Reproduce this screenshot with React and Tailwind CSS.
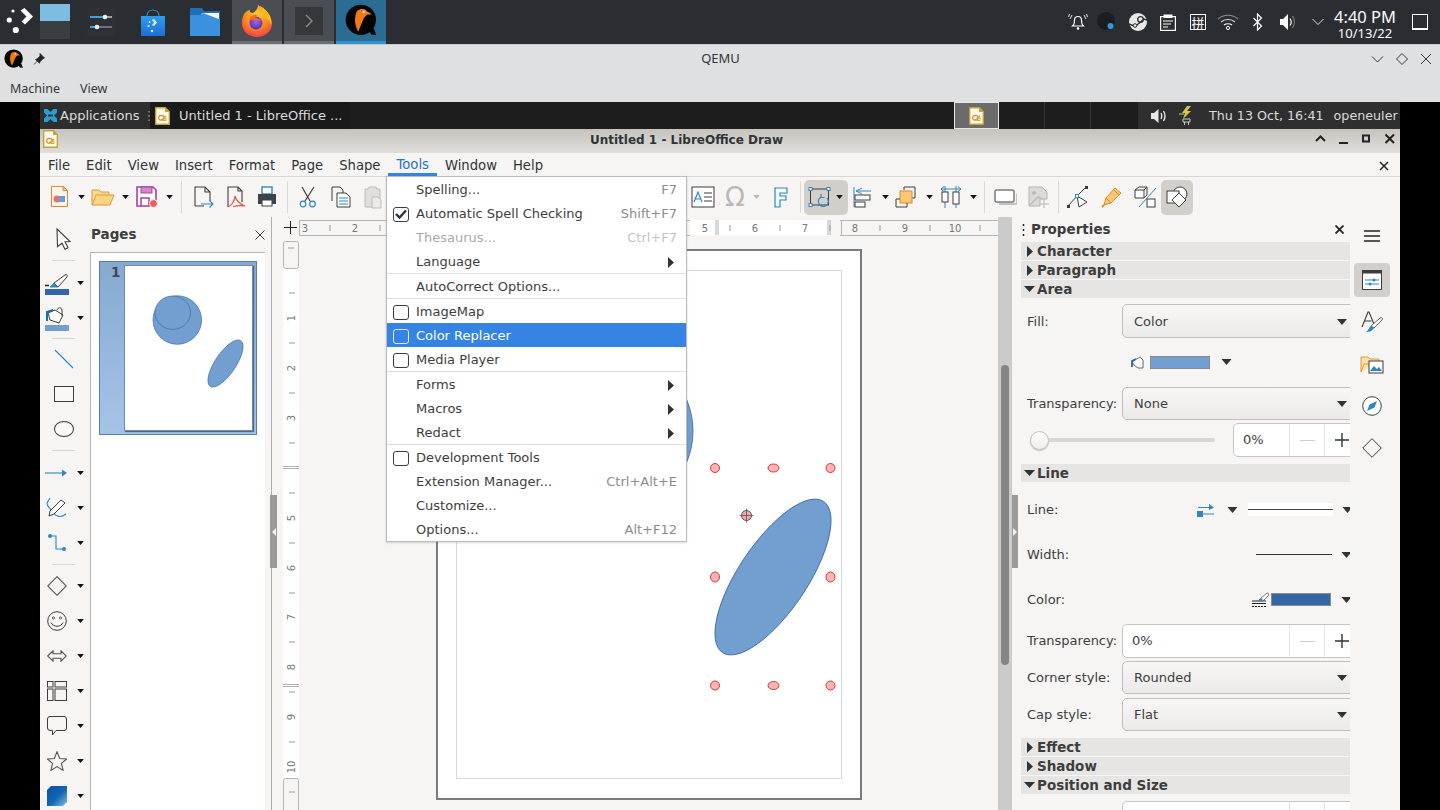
import React from 'react';

const D = "font-['DejaVu_Sans',sans-serif]";
const N = "font-['Noto_Sans',sans-serif]";
const INK = '#3d3d3d';
const BL = '#2f86c1';

const Svg = ({ w = 24, h = 24, children, className = '' }) => (
  <svg width={w} height={h} viewBox={`0 0 ${w} ${h}`} fill="none" className={'block shrink-0 ' + className}>{children}</svg>
);
const Tri = ({ color = '#111', w = 7, h = 4 }) => (
  <svg width={w} height={h} viewBox="0 0 10 6" className="block shrink-0"><path d="M0 0H10L5 6Z" fill={color} /></svg>
);

const QemuLogo = ({ s = 20 }) => (
  <svg width={s} height={s} viewBox="0 0 20 20" className="block shrink-0">
    <circle cx="9.6" cy="9.6" r="9.2" fill="#050505" />
    <path d="M14 15l3.5 0 1.5 3.8-3.2-.3z" fill="#050505" />
    <path d="M6.3 7.5C6.4 4 9 2.6 11.2 3.1c1 .2 1.7.8 2.3 1.5l2.8 1.6-3 .3c-1.2.9-2 2.3-2.7 3.9l-2.6 6.4C6.2 12.8 5.7 10 6.3 7.5z" fill="#f07a17" />
    <circle cx="11.4" cy="4.9" r=".7" fill="#fff" />
  </svg>
);

const DrawDoc = ({ w = 15, h = 18 }) => (
  <svg width={w} height={h} viewBox="0 0 15 18" className="block shrink-0">
    <path d="M.7.7h9.6l4 4v12.6H.7z" fill="#fffdf2" stroke="#c7a02e" strokeWidth="1.4" />
    <path d="M10 .7l4.3 4.3H10z" fill="#c7a02e" />
    <ellipse cx="6.4" cy="10.8" rx="2.8" ry="2.4" fill="none" stroke="#e2802c" strokeWidth="1.1" />
    <path d="M6 13.2l5-4.2" stroke="#c7a02e" strokeWidth="1.1" />
    <path d="M8 11h3v2.5H8z" fill="none" stroke="#d7a62d" strokeWidth="1" />
  </svg>
);

const Tray = ({ children }) => <div className="flex h-[30px] w-[30px] items-center justify-center">{children}</div>;

/* ---------- KDE panel ---------- */
const TopPanel = () => (
  <div className="flex h-[45px] shrink-0 items-stretch border-b border-[#c8cacc] bg-[#2a2e32]">
    <div className="flex w-[40px] items-center justify-center">
      <svg width="30" height="32" viewBox="0 0 30 32" className="block">
        <circle cx="8" cy="5" r="1.6" fill="#fcfcfc" />
        <circle cx="4.3" cy="14" r="2.6" fill="#fcfcfc" />
        <circle cx="10.8" cy="24" r="3.1" fill="#fcfcfc" />
        <path d="M15.5 4.5l4-2.5 8.5 8.5-8 8-3.5-3 5-5z" fill="#fcfcfc" />
      </svg>
    </div>
    <div className="my-[4px] flex w-[30px] flex-col">
      <div className="h-[17px] bg-[#7dbde2]" />
      <div className="h-[18px] bg-[#3a3e43]" />
    </div>
    <div className="flex w-[62px] items-center justify-center">
      <svg width="28" height="28" viewBox="0 0 28 28" className="block">
        <rect width="28" height="28" fill="#2d3136" />
        <rect x="3" y="8" width="22" height="2" fill="#9ea2a5" />
        <rect x="3" y="8" width="15" height="2" fill="#3f9fe6" />
        <circle cx="18" cy="9" r="2.3" fill="#f2f2f2" />
        <rect x="3" y="18" width="22" height="2" fill="#6f7377" />
        <rect x="3" y="18" width="9" height="2" fill="#3f9fe6" />
        <circle cx="10" cy="19" r="2.3" fill="#f2f2f2" />
      </svg>
    </div>
    <div className="flex w-[42px] items-center justify-center">
      <svg width="26" height="28" viewBox="0 0 26 28" className="block">
        <defs><linearGradient id="bag" x1="0" y1="0" x2="0" y2="1"><stop offset="0" stopColor="#2e9cf0" /><stop offset="1" stopColor="#1c6fd6" /></linearGradient></defs>
        <path d="M7 8C7 0 19 0 19 8" stroke="#2a8fd8" strokeWidth="1.2" fill="none" />
        <path d="M1 8h24v20H1z" fill="url(#bag)" />
        <path d="M12 12l2-1 3 3.5-3 3.5-2-1 2-2.500z" fill="#e9f5ff" />
        <circle cx="9.500" cy="14" r=".9" fill="#e9f5ff" /><circle cx="8.500" cy="18" r="1.100" fill="#e9f5ff" /><circle cx="12" cy="23" r="1.200" fill="#e9f5ff" />
      </svg>
    </div>
    <div className="ml-[4px] flex w-[54px] items-center justify-center">
      <svg width="30" height="28" viewBox="0 0 30 28" className="block">
        <path d="M0 0h12l2 3h16v25H0z" fill="#1f6fb6" />
        <path d="M12 5H29v6H10z" fill="#f4f8fb" />
        <path d="M0 7h11l2-2 17 6.500V28H0z" fill="#3a92de" />
      </svg>
    </div>
    <div className="flex w-[50px] items-center justify-center border-b-[3px] border-[#6a6e72] bg-[#4a4e52]">
      <svg width="32" height="32" viewBox="0 0 32 32" className="block">
        <defs>
          <radialGradient id="ff" cx=".5" cy=".3" r=".8"><stop offset="0" stopColor="#ffcf30" /><stop offset=".5" stopColor="#ff8a1d" /><stop offset="1" stopColor="#f02a55" /></radialGradient>
          <radialGradient id="ffp" cx=".5" cy=".4" r=".7"><stop offset="0" stopColor="#9a68f5" /><stop offset="1" stopColor="#4a26a0" /></radialGradient>
        </defs>
        <path d="M2 12C3 8 6 5 9 5c-1 2 1 3 3 3 3-2 5-5 5-8 3 2 6 3 9 7 3 3 5 8 5 12 0 7-7 13-15 13S1 27 1 18c0-2 0-4 1-6z" fill="url(#ff)" />
        <path d="M19 1c4 2 8 6 10 10 1 3 2 6 1 9-2-5-5-8-9-10 1-3 0-6-2-9z" fill="#ffb81f" />
        <circle cx="15" cy="18" r="6.500" fill="url(#ffp)" />
        <path d="M8 15c1-4 5-6 9-5-2 1-3 2-3 3 3 0 5 1 7 4-3-2-8-2-13-2z" fill="#ff6a1a" />
      </svg>
    </div>
    <div className="ml-[2px] flex w-[50px] items-center justify-center border-b-[3px] border-[#6a6e72] bg-[#4a4e52]">
      <svg width="28" height="28" viewBox="0 0 28 28" className="block">
        <rect width="28" height="28" fill="#34383a" />
        <path d="M11 8l6 6-6 6" stroke="#8b8f91" strokeWidth="1.400" fill="none" />
      </svg>
    </div>
    <div className="ml-[2px] flex w-[50px] items-center justify-center border-b-[3px] border-[#2f93d1] bg-[#2a6c92]">
      <QemuLogo s={33} />
    </div>
    <div className="ml-auto flex items-center">
      <Tray><svg width="20" height="18" viewBox="0 0 20 18"><path d="M5.500 12c1-1 1-3 1-5a3.500 3.500 0 017 0c0 2 0 4 1 5l1 1H4.500z" stroke="#fcfcfc" strokeWidth="1.200" fill="none" /><circle cx="10" cy="15.500" r="1.300" fill="#fcfcfc" /><path d="M4 2L2 6M1.500 1L.5 4M16 2l2 4M18.500 1l1 3" stroke="#fcfcfc" strokeWidth=".9" /></svg></Tray>
      <Tray><svg width="22" height="22" viewBox="0 0 22 22"><circle cx="9" cy="10" r="9" fill="#1b1d20" /><circle cx="13.500" cy="15" r="3" fill="#3398e3" /></svg></Tray>
      <Tray><svg width="18" height="18" viewBox="0 0 18 18"><circle cx="9" cy="9" r="9" fill="#e8e8e8" /><path d="M0 11l6 2.500 5-4 4-3.500 3 1" stroke="#2a2e32" strokeWidth="1.400" fill="none" /><circle cx="11.500" cy="6.500" r="2.800" fill="none" stroke="#2a2e32" strokeWidth="1.300" /><circle cx="6" cy="12.500" r="1.800" fill="#e8e8e8" stroke="#2a2e32" /></svg></Tray>
      <Tray><svg width="16" height="17" viewBox="0 0 16 17"><rect x=".6" y="2.600" width="14.800" height="13.800" fill="none" stroke="#fcfcfc" strokeWidth="1.200" /><rect x="3.500" y=".5" width="9" height="3.500" fill="#fcfcfc" /><path d="M3 7h10M3 10h8M3 13h5" stroke="#fcfcfc" strokeWidth="1" /></svg></Tray>
      <Tray>
        <div className="flex h-[16px] w-[16px] items-center justify-center border border-[#fcfcfc] font-['Noto_Sans_CJK_SC',sans-serif] text-[13px] leading-none text-[#fcfcfc]">拼</div>
      </Tray>
      <Tray><svg width="22" height="16" viewBox="0 0 22 16" fill="none"><path d="M1 5c5.500-5 14.500-5 20 0" stroke="#8a8d90" strokeWidth="1.100" /><path d="M4 8c3.800-3.300 10.200-3.300 14 0" stroke="#dfe0e1" strokeWidth="1.100" /><path d="M7 11c2.200-1.700 5.800-1.700 8 0" stroke="#fcfcfc" strokeWidth="1.100" /><circle cx="11" cy="14" r="1.600" stroke="#fcfcfc" strokeWidth="1" /></svg></Tray>
      <Tray><svg width="12" height="18" viewBox="0 0 12 18" fill="none"><path d="M1.500 5l8 8-4 4V1l4 4-8 8" stroke="#fcfcfc" strokeWidth="1.200" /></svg></Tray>
      <Tray><svg width="18" height="18" viewBox="0 0 18 18" fill="none"><path d="M1 6h3l5-5v16l-5-5H1z" fill="#fcfcfc" /><path d="M11 5.500c1.400 2 1.400 5 0 7" stroke="#fcfcfc" strokeWidth="1.200" /><path d="M13.500 3c2.400 3.500 2.400 8.500 0 12" stroke="#7e8183" strokeWidth="1.200" /></svg></Tray>
      <Tray><svg width="14" height="8" viewBox="0 0 14 8" fill="none"><path d="M1.500 1l5.500 5.500L12.500 1" stroke="#dfe0e1" strokeWidth="1" /></svg></Tray>
      <div className={`ml-[2px] flex w-[60px] flex-col items-center text-[#fcfcfc] ${N}`}>
        <div className="mt-[1px] h-[21px] whitespace-nowrap text-[16.500px] leading-[21px]">4:40 PM</div>
        <div className="h-[13px] whitespace-nowrap text-[13px] leading-[13px]">10/13/22</div>
      </div>
      <div className="ml-[17px] mr-[12px] flex h-[16px] w-[16px] items-end border border-[#fcfcfc]"><div className="h-[1px] w-full bg-[#fcfcfc]" /></div>
    </div>
  </div>
);

const QemuBar = () => (
  <div className={`shrink-0 bg-[#dee0e2] text-[#31363b] ${N}`}>
    <div className="relative flex h-[27px] items-center">
      <div className="ml-[4px]"><QemuLogo s={20} /></div>
      <svg width="12" height="12" viewBox="0 0 12 12" className="ml-[9px] block"><path d="M7 .5l4.500 4.500-1.500.7-3 3-.5 1.500L2.500 6.500l1.500-.5 3-3zM4.500 8L1 11.500" fill="#232629" stroke="#232629" strokeWidth=".8" /></svg>
      <div className="flex-1 pl-[26px] text-center text-[13px] leading-none">QEMU</div>
      <svg width="64" height="14" viewBox="0 0 64 14" className="mr-[6px] block" fill="none" stroke="#31363b" strokeWidth="1"><path d="M2 4.500l5.500 5.500L13 4.500" /><path d="M32 1.500L37.500 7 32 12.500 26.500 7z" /><path d="M51 2l10 10M61 2L51 12" /></svg>
    </div>
    <div className="flex h-[30px] items-start pt-[9px] text-[12.500px] leading-[15px]">
      <span className="ml-[10px]">Machine</span>
      <span className="ml-[20px]">View</span>
    </div>
  </div>
);

const XfcePanel = () => (
  <div className={`flex h-[27px] shrink-0 items-stretch bg-[#1d1d1d] text-[13px] text-[#dcdcdc] ${D}`}>
    <div className="flex w-[110px] shrink-0 items-center bg-[#2f2f2f]">
      <svg width="15" height="15" viewBox="0 0 15 15" className="ml-[3px] block shrink-0"><path d="M1 1h3.500L7.500 4 10.500 1H14v3.500L11 7.500l3 3V14h-3.500l-3-3-3 3H1v-3.500l3-3-3-3z" fill="#2b9fd4" /><rect x="5" y="6.500" width="5" height="2" fill="#2f2f2f" /></svg>
      <span className="ml-[2px] whitespace-nowrap">Applications</span>
      <span className="ml-[3px] text-[#8f8f8f]">⋮</span>
    </div>
    <div className="flex w-[200px] shrink-0 items-center rounded-[3px] bg-[#1a1a1a]">
      <div className="ml-[5px]"><DrawDoc /></div>
      <span className="ml-[9px] whitespace-nowrap">Untitled 1 - LibreOffice ...</span>
    </div>
    <div className="w-[604px] shrink-0" />
    <div className="flex h-full w-[45px] shrink-0 items-center justify-center border border-[#e8e8e8] bg-[#6b6b6b]"><DrawDoc /></div>
    <div className="w-[46px] shrink-0 border-r border-[#353535]" />
    <div className="w-[46px] shrink-0 border-r border-[#353535]" />
    <div className="w-[47px] shrink-0" />
    <div className="flex flex-1 items-center overflow-hidden bg-[#2f2f2f] text-[12.700px]">
      <svg width="16" height="16" viewBox="0 0 16 16" className="ml-[13px] block shrink-0" fill="none"><path d="M0 5h3l4.500-4v14L3 11H0z" fill="#e6e6e6" /><path d="M10 5c1 2 1 4 0 6M12.500 3c1.800 3 1.800 7 0 10" stroke="#e6e6e6" strokeWidth="1.400" /></svg>
      <svg width="16" height="20" viewBox="0 0 16 20" className="ml-[11px] block shrink-0"><path d="M9 0L4 7h3L5 13l8-8H9l4-5z" fill="#d8c64a" /><path d="M1 8h5M5 13h7v3H5zM6.500 16v3M10.500 16v3" stroke="#c8c8c8" strokeWidth="1" fill="none" /></svg>
      <span className="ml-[15px] whitespace-nowrap">Thu 13 Oct, 16:41</span>
      <span className="ml-[10px] whitespace-nowrap">openeuler</span>
    </div>
  </div>
);

const TitleBar = () => (
  <div className={`flex h-[24px] shrink-0 items-start bg-gradient-to-b from-[#c6c3be] to-[#e0dedb] ${D}`}>
    <div className="ml-[3px] mt-[1px] w-[17px]"><DrawDoc /></div>
    <div className="flex-1 pl-[2px] pt-[5px] text-center text-[12px] font-bold leading-[12px] text-[#2e3436]">Untitled 1 - LibreOffice Draw</div>
    <svg width="86" height="12" viewBox="0 0 86 12" className="mr-[3px] mt-[4px] block" fill="none" stroke="#222" strokeWidth="2"><path d="M5 8l4.500-4.500L14 8" /><path d="M28 10h9" /><rect x="52" y="2.500" width="6" height="6" /><path d="M74.500 1.500l8.500 8.500M83 1.500L74.500 10" /></svg>
  </div>
);

const MENU = ['File', 'Edit', 'View', 'Insert', 'Format', 'Page', 'Shape'];
const MenuBar = () => (
  <div className={`flex h-[24px] shrink-0 items-center border-b border-[#d8d6d3] bg-[#f6f5f4] pt-[2px] text-[13.200px] text-[#2e3436] ${D}`}>
    {MENU.map(t => <span key={t} className="px-[8px]">{t}</span>)}
    <div className="flex h-full items-center border-b-[3px] border-[#3584e4] px-[8px] pt-[1px] text-[#1c71d8]">Tools</div>
    <span className="px-[8px]">Window</span>
    <span className="px-[8px]">Help</span>
    <svg width="10" height="10" viewBox="0 0 10 10" className="ml-auto mr-[11px] block" fill="none" stroke="#222" strokeWidth="1.500"><path d="M1 1l8 8M9 1L1 9" /></svg>
  </div>
);

const Slot = ({ className, children }) => <div className={'flex shrink-0 items-center justify-center ' + className}>{children}</div>;
const TB = ({ className, children }) => <Slot className={className}><Svg>{children}</Svg></Slot>;
const Sep = ({ className }) => <Slot className={className}><div className="h-[32px] w-[1px] bg-[#dbd9d6]" /></Slot>;
const AR = ({ className }) => <Slot className={className}><Tri /></Slot>;

const Toolbar = () => (
  <div className="flex h-[40px] shrink-0 items-center bg-[#f6f5f4] pl-[4px]">
    <TB className="w-[32px]"><path d="M3.500 1.500h12l4 4v16h-16z" fill="#fff5e9" stroke="#d9873a" /><path d="M15 1.500v4h4.500z" fill="#f7c88d" stroke="#d9873a" /><circle cx="9" cy="14" r="3.500" fill="#e5716a" /><rect x="11" y="11" width="6" height="6" fill="#5da2d8" /></TB>
    <AR className="w-[10px]" />
    <TB className="w-[34px]"><path d="M1 20V5h7l2 2h8v3" fill="#fbd98f" stroke="#dd9a3b" /><path d="M1 20l4-10h18l-4 10z" fill="#fcd47f" stroke="#dd9a3b" /></TB>
    <AR className="w-[10px]" />
    <TB className="w-[34px]"><path d="M2 2h16l3 3v16H2z" fill="#fff" stroke="#a7409e" strokeWidth="1.600" /><rect x="6" y="2" width="11" height="6" fill="#d486cd" stroke="#a7409e" /><path d="M6 21v-8h8v8" stroke="#a7409e" strokeWidth="1.500" /><circle cx="18.500" cy="18.500" r="4" fill="#ec5f55" stroke="#fff" /></TB>
    <AR className="w-[10px]" />
    <Sep className="w-[14px]" />
    <TB className="w-[30px]"><path d="M4 21V2h10l5 5v9M14 2v5h5M4 21h9" stroke={INK} strokeWidth="1.100" /><path d="M10 19h12M18.500 15.500L22 19l-3.500 3.500" stroke={BL} strokeWidth="1.100" /></TB>
    <TB className="w-[34px]"><path d="M5 22V2h10l4 4v11M15 2v4h4" stroke={INK} strokeWidth="1.100" /><path d="M5 22c3-1 7-6 7-11 1 4 5 8 10 10-4-.500-8-.500-12 .500" stroke="#e2574c" strokeWidth="1.200" /></TB>
    <TB className="w-[30px]"><rect x="7" y="2" width="10" height="7" fill="#fff" stroke="#2f86c1" strokeWidth="1.400" /><path d="M3 9h18v10H3z" fill="#3d4347" /><rect x="7" y="15" width="10" height="6" fill="#fff" stroke="#3d4347" /></TB>
    <Sep className="w-[10px]" />
    <TB className="w-[32px]"><path d="M6 2l8 14M18 2L9 16" stroke={INK} strokeWidth="1.200" /><circle cx="7" cy="19" r="2.800" stroke={BL} strokeWidth="1.200" /><circle cx="16.500" cy="19" r="2.800" stroke={BL} strokeWidth="1.200" /></TB>
    <TB className="w-[34px]"><path d="M3 16V2h8l3 3v3" stroke={INK} /><path d="M8 8h9l4 4v10H8z" fill="#fff" stroke={INK} /><path d="M10 13h9M10 16h9M10 19h9" stroke={BL} /></TB>
    <TB className="w-[30px]"><path d="M4 4h3l1-2h7l1 2h3v18H4z" fill="#dfdedc" stroke="#bdbcba" /><path d="M11 12h6l3 3v8h-9z" fill="#eceae8" stroke="#bdbcba" /></TB>
    <div className="w-[299px] shrink-0" />
    <TB className="w-[32px]"><rect x="1" y="2" width="22" height="20" fill="#fff" stroke={INK} /><path d="M3 17l4-10 4 10M4.500 14h5" stroke={BL} strokeWidth="1.200" /><path d="M13 8h8M13 12h8M13 16h8" stroke={INK} /></TB>
    <Slot className={`w-[32px] text-[26px] leading-none text-[#b9b8b6] ${D}`}>Ω</Slot>
    <Slot className="w-[10px]"><Tri color="#b9b8b6" /></Slot>
    <TB className="w-[38px]"><path d="M7 3h12v5h-7v3h6v4h-6v7H7z" stroke={BL} strokeWidth="1.200" fill="#f2f8fc" /></TB>
    <Slot className="w-[2px]"><div className="h-[32px] w-[1px] bg-[#dbd9d6]" /></Slot>
    <div className="ml-[3px] flex h-[35px] w-[44px] shrink-0 items-center rounded-[5px] bg-[#d2cfcb]">
      <Slot className="ml-[3px] w-[26px]"><Svg><rect x="2.500" y="4" width="18" height="16" stroke={INK} /><rect x="1" y="2.500" width="3" height="3" fill="#fff" stroke={BL} /><rect x="19" y="2.500" width="3" height="3" fill="#fff" stroke={BL} /><rect x="1" y="18.500" width="3" height="3" fill="#fff" stroke={BL} /><path d="M19 13a5 5 0 11-6-1M13 9v3.500h3.500" stroke={BL} strokeWidth="1.200" /></Svg></Slot>
      <Slot className="ml-[1px] w-[10px]"><Tri /></Slot>
    </div>
    <TB className="w-[30px]"><path d="M3 2v20" stroke={BL} /><path d="M11 3L5 6l6 3M5 6h15" stroke={BL} /><rect x="4" y="10" width="15" height="5" fill="#fff" stroke={INK} /><rect x="4" y="17" width="10" height="5" fill="#fff" stroke={INK} /></TB>
    <AR className="w-[14px]" />
    <TB className="w-[28px]"><path d="M10 5V2h11v11h-3" stroke={INK} /><rect x="6" y="6" width="12" height="12" fill="#fbc675" stroke="#d98e28" /><path d="M6 14H2v8h11v-4" stroke={INK} /></TB>
    <AR className="w-[18px]" />
    <TB className="w-[26px]"><path d="M6 1v6M6 17v6M17 1v6M17 17v6" stroke={BL} /><rect x="3" y="7" width="6" height="10" fill="#fff" stroke={INK} /><rect x="14" y="7" width="6" height="12" fill="#fff" stroke={INK} /><path d="M2 4h20M5 1.500L2 4l3 2.500M19 1.500L22 4l-3 2.500" stroke={BL} /></TB>
    <AR className="w-[18px]" />
    <Slot className="w-[4px]"><div className="h-[32px] w-[1px] bg-[#dbd9d6]" /></Slot>
    <TB className="w-[38px]"><path d="M6 19h18V9" stroke="#c3c2c0" strokeWidth="2" /><rect x="2" y="5" width="19" height="12" rx="1" fill="#fff" stroke={INK} /></TB>
    <TB className="w-[28px]"><path d="M3 2h13l5 5v7H14v7H3z" fill="#dbdad8" stroke="#b5b4b2" /><path d="M4 20l8-8 4 2" stroke="#bcbbb9" strokeWidth="1.500" /><circle cx="8" cy="8" r="2" fill="#bcbbb9" /><path d="M18 14v9M14 19h9" stroke="#b5b4b2" /></TB>
    <Slot className="w-[12px]"><div className="h-[32px] w-[1px] bg-[#dbd9d6]" /></Slot>
    <TB className="w-[28px]"><path d="M2 21l9-10 9-9" stroke={INK} /><path d="M11 11l2 11 8-5z" fill="#fff" stroke={INK} /><rect x="9.500" y="9.500" width="3" height="3" fill="#fff" stroke={BL} /><rect x="1" y="20" width="3" height="3" fill={INK} /><rect x="19" y="1" width="3" height="3" fill={INK} /></TB>
    <TB className="w-[40px]"><path d="M4 20l2-7 9-10 6 5-10 10z" fill="#fbc675" stroke="#d98e28" /><path d="M6 13l5 5M14 5l5 5" stroke="#d98e28" /><path d="M4 20l-2 2" stroke="#d98e28" strokeWidth="2" /></TB>
    <TB className="w-[26px]"><path d="M2 5l4-3h8v8l-3 3H2zM2 5h9v8M11 5l3-3" stroke={INK} fill="#fff" /><path d="M6 22L23 3" stroke={BL} /><rect x="14" y="14" width="8" height="8" fill="#fff" stroke={INK} /></TB>
    <div className="ml-[3px] flex h-[35px] w-[32px] shrink-0 items-center justify-center rounded-[5px] bg-[#d2cfcb]">
      <Svg><circle cx="15" cy="9" r="7" fill="#fff" stroke={INK} /><rect x="2" y="6" width="12" height="12" fill="#fff" stroke={INK} /><path d="M14 8l7 7-7 7-7-7z" fill="#fff" stroke={INK} /></Svg>
    </div>
  </div>
);

const LeftTool = ({ children, arrow }) => (
  <div className="flex h-[35px] w-[50px] shrink-0 items-center">
    {arrow ? (<><Slot className="w-[34px]">{children}</Slot><Slot className="w-[12px]"><Tri /></Slot></>) : <Slot className="w-[48px]">{children}</Slot>}
  </div>
);
const LSep = ({ className }) => <div className={`flex w-[50px] shrink-0 items-center pl-[12px] ${className}`}><div className="h-[1px] w-[23px] bg-[#dbd9d6]" /></div>;

const LeftBar = () => (
  <div className="flex w-[50px] shrink-0 flex-col pt-[3px]">
    <LeftTool><Svg w={18} h={24}><path d="M2 3l13 12.500-5 .2 3 6-3 1.500-3-6-4.500 3.500z" fill="#fff" stroke={INK} strokeWidth="1.100" /></Svg></LeftTool>
    <LSep className="h-[10px]" />
    <LeftTool arrow><Svg h={24}><path d="M9 12l4 4 9-10c1-2-1-3-2-2z" fill="#fff" stroke={INK} /><path d="M9 12c-1 2-3 3-4 4h8" fill={BL} stroke={BL} /><path d="M0 14.500h4" stroke="#222" strokeWidth="1.500" /><rect y="18" width="24" height="6" fill="#3465a4" /></Svg></LeftTool>
    <LeftTool arrow><Svg h={26}><path d="M3 8l7-3 8 5-4 8-9-3z" fill="#fff" stroke={INK} /><path d="M2 16V7l6-2" stroke="#1d6ab0" strokeWidth="2" /><path d="M12 5c1-3 4-3 5 0v6" stroke={INK} /><rect y="20" width="24" height="6" fill="#729fcf" /></Svg></LeftTool>
    <LSep className="h-[6px]" />
    <LeftTool><Svg w={20} h={20}><path d="M1 1l18 18" stroke={BL} strokeWidth="1.100" /></Svg></LeftTool>
    <LeftTool><div className="h-[16px] w-[20px] border border-[#3d3d3d] bg-[#f8f8f8]" /></LeftTool>
    <LeftTool><div className="h-[16px] w-[20px] rounded-[50%] border border-[#3d3d3d] bg-[#f8f8f8]" /></LeftTool>
    <LSep className="h-[9px]" />
    <LeftTool arrow><Svg h={10}><path d="M0 5h18" stroke={BL} strokeWidth="1.100" /><path d="M17 1.500l5 3.500-5 3.500z" fill={BL} /></Svg></LeftTool>
    <LeftTool arrow><Svg w={22} h={22}><path d="M4 1l-3 5c0 5 3 4 6 9 3 5 8 6 13 2" stroke={BL} strokeWidth="1.100" /><path d="M4 14L15 3l4 3L8 17l-5 2z" fill="#fff" stroke={INK} /></Svg></LeftTool>
    <LeftTool arrow><Svg w={20} h={20}><path d="M3 3h6v13h8" stroke={BL} strokeWidth="1.100" /><circle cx="3" cy="3" r="2" fill={BL} /><circle cx="17" cy="16" r="2" fill={BL} /></Svg></LeftTool>
    <LSep className="h-[8px]" />
    <LeftTool arrow><Svg w={20} h={20}><path d="M10 .7L19.300 10 10 19.300.7 10z" stroke="#555" strokeWidth="1.100" /></Svg></LeftTool>
    <LeftTool arrow><Svg w={20} h={20}><circle cx="10" cy="10" r="9.300" stroke={INK} /><circle cx="6.500" cy="7" r="1.100" stroke={INK} strokeWidth=".8" /><circle cx="13.500" cy="7" r="1.100" stroke={INK} strokeWidth=".8" /><path d="M4 11.500c2 5 10 5 12 0" stroke={INK} /></Svg></LeftTool>
    <LeftTool arrow><Svg w={20} h={12}><path d="M.7 6L6 .8v3h8V.8L19.300 6 14 11.200v-3H6v3z" stroke="#555" strokeWidth="1.100" /></Svg></LeftTool>
    <LeftTool arrow><Svg w={20} h={20}><rect x=".5" y=".5" width="5.500" height="5.500" stroke={INK} /><rect x="8" y=".5" width="11.500" height="5.500" stroke={INK} /><rect x=".5" y="8" width="5.500" height="11.500" stroke={INK} /><rect x="8" y="8" width="11.500" height="11.500" stroke={INK} /></Svg></LeftTool>
    <LeftTool arrow><Svg w={20} h={20}><path d="M3 .5h14a2.500 2.500 0 012.500 2.500v9a2.500 2.500 0 01-2.500 2.500H9l-3.500 4.500v-4.500H3A2.500 2.500 0 01.5 12V3A2.500 2.500 0 013 .5z" stroke={INK} /></Svg></LeftTool>
    <LeftTool arrow><Svg w={20} h={20}><path d="M10 .8l2.700 6.700 7 .5-5.300 4.400 1.700 7L10 15.600l-6.100 3.800 1.700-7L.3 8l7-.5z" stroke="#555" strokeWidth="1.100" /></Svg></LeftTool>
    <LeftTool arrow><svg width="20" height="20" viewBox="0 0 20 20" className="block"><defs><linearGradient id="cube" x1="0" y1="0" x2="1" y2="1"><stop offset="0" stopColor="#0a4f9c" /><stop offset=".55" stopColor="#1466b6" /><stop offset="1" stopColor="#8fbce0" /></linearGradient></defs><path d="M4 0h16v16l-4 4H0V4z" fill="url(#cube)" /></svg></LeftTool>
  </div>
);

const PagesPanel = () => (
  <div className="flex w-[181px] shrink-0 flex-col">
    <div className={`flex h-[35px] shrink-0 items-center pl-[1px] text-[13.500px] font-bold text-[#3d3d3d] ${D}`}>
      <span>Pages</span>
      <svg width="10" height="10" viewBox="0 0 10 10" className="ml-auto mr-[6px] block" fill="none" stroke="#3d3d3d" strokeWidth="1"><path d="M.5.5l9 9M9.500.5l-9 9" /></svg>
    </div>
    <div className="flex-1 border-l border-t border-[#b4b4b4] bg-white pl-[8px] pt-[8px] mr-[6px]">
      <div className="relative h-[174px] w-[158px] border border-[#5b7ea6] bg-gradient-to-b from-[#86a9d0] to-[#a6c4e8]">
        <div className={`absolute left-[11px] top-[1px] text-[13.500px] font-bold leading-[18px] text-[#3c4a5a] ${D}`}>1</div>
        <div className="absolute left-[24px] top-[3px] h-[166px] w-[129px] border border-[#6f8bab] bg-white shadow-[1px_1px_1px_#4d6a8c]">
          <svg width="127" height="164" viewBox="1 1 127 164" className="block">
            <circle cx="53.300" cy="55" r="24.300" fill="#729fcf" stroke="#3465a4" strokeWidth=".6" />
            <ellipse cx="48.700" cy="47.700" rx="17.800" ry="16.700" fill="#729fcf" stroke="#3465a4" strokeWidth=".6" />
            <ellipse cx="101.500" cy="98.500" rx="27.500" ry="10.400" transform="rotate(-56.200 101.500 98.500)" fill="#729fcf" stroke="#3465a4" strokeWidth=".6" />
          </svg>
        </div>
      </div>
    </div>
  </div>
);

const HRuler = () => {
  const nums = [[305, '3'], [355, '2'], [705, '5'], [755, '6'], [805, '7'], [855, '8'], [905, '9'], [955, '10']];
  const ticks = [330, 380, 730, 780, 830, 880, 930, 980];
  return (
    <svg width="699" height="16" viewBox="299 220 699 16" className="mt-[3px] block shrink-0">
      <rect x="299.500" y="220.500" width="720" height="15" fill="#f6f5f4" stroke="#b4b4b4" />
      <rect x="690" y="220" width="150" height="16" fill="#f6f5f4" />
      <rect x="690" y="220" width="140" height="15.500" fill="#fff" />
      <path d="M841.500 220.500v15h170" fill="none" stroke="#b4b4b4" />
      <path d="M841.500 220.500h170" fill="none" stroke="#b4b4b4" />
      <path d="M716 220v15M718 220v15M828 220v15M830 220v15" stroke="#b0b0b0" />
      {ticks.map(t => <path key={t} d={`M${t} 225v6`} stroke="#9a9a9a" />)}
      {nums.map(([x, n]) => <text key={n} x={x} y="232" textAnchor="middle" fontFamily="DejaVu Sans" fontSize="10" fill="#777">{n}</text>)}
    </svg>
  );
};

const VRuler = () => {
  const nums = [[318, '1'], [368, '2'], [418, '3'], [518, '5'], [568, '6'], [617, '7'], [667, '8'], [717, '9'], [767, '10']];
  const ticks = [293, 343, 393, 443, 493, 543, 593, 642, 692, 742, 792];
  return (
    <svg width="16" height="569" viewBox="283 241 16 569" className="block shrink-0">
      <rect x="283" y="268" width="16" height="510" fill="#fff" />
      <rect x="283.500" y="241.500" width="15" height="27" rx="2" fill="#f6f5f4" stroke="#b4b4b4" />
      <rect x="283.500" y="778.500" width="15" height="40" rx="2" fill="#f6f5f4" stroke="#b4b4b4" />
      <path d="M288 248h6" stroke="#9a9a9a" />
      {ticks.map(t => <path key={t} d={`M289 ${t}h6`} stroke="#9a9a9a" />)}
      <path d="M283 466.500h16M283 468.500h16M283 684.500h16M283 686.500h16" stroke="#b0b0b0" />
      {nums.map(([y, n]) => <text key={n} x="0" y="0" transform={`translate(295 ${y}) rotate(-90)`} textAnchor="middle" fontFamily="DejaVu Sans" fontSize="10" fill="#777">{n}</text>)}
    </svg>
  );
};

const Handle = ({ x, y, rx = 4.500, ry = 4.500 }) => <ellipse cx={x} cy={y} rx={rx} ry={ry} fill="#ffb3b3" stroke="#cc3b3b" />;

const CanvasCol = () => (
  <div className="flex w-[727px] shrink-0 flex-col overflow-hidden border-l border-[#aeaeae]">
    <div className="flex h-[24px] shrink-0 items-start pl-[11px]">
      <Slot className="mt-[3px] h-[15px] w-[16px]"><svg width="13" height="13" viewBox="0 0 13 13" className="-ml-[2px] block" fill="none" stroke="#222"><path d="M6.500 0v13M0 6.500h13" /></svg></Slot>
      <HRuler />
    </div>
    <div className="flex min-h-0 flex-1 pl-[11px]">
      <VRuler />
      <div className="min-w-0 flex-1 pl-[137px] pt-[8px]">
        <div className="relative h-[551px] w-[426px] border-2 border-[#7a7a7a] bg-white pl-[18px] pt-[19px]">
          <div className="h-[509px] w-[386px] border border-[#d9d9d9]" />
          <svg width="426" height="551" viewBox="436 249 426 551" className="absolute -left-[2px] -top-[2px] block">
            <circle cx="612" cy="431" r="81" fill="#729fcf" stroke="#3465a4" strokeWidth=".8" />
            <ellipse cx="773" cy="577" rx="90.900" ry="34.300" transform="rotate(-56.200 773 577)" fill="#729fcf" stroke="#3465a4" strokeWidth=".8" />
            <Handle x={715} y={468} /><Handle x={773.500} y={468} rx={5.500} ry={4} /><Handle x={830.500} y={468} />
            <Handle x={715} y={577} ry={5} /><Handle x={830.500} y={577} ry={5} />
            <Handle x={715} y={685.500} /><Handle x={773.500} y={685.500} rx={5.500} ry={4} /><Handle x={830.500} y={685.500} />
            <circle cx="746.500" cy="515.500" r="5" fill="#f5a9a9" stroke="#555" />
            <path d="M746.500 508.500v14M739.500 515.500h14" stroke="#555" strokeWidth=".8" />
          </svg>
        </div>
      </div>
    </div>
  </div>
);

const ScrollTrack = () => (
  <div className="flex w-[14px] shrink-0 flex-col bg-[#cbcbcb] pl-[3px] pt-[148px]">
    <div className="h-[300px] w-[8px] rounded-[4px] bg-[#858585]" />
  </div>
);

const Drop = ({ label, h = 'h-[33px]' }) => (
  <div className={`flex w-[250px] shrink-0 items-center justify-between rounded-[5px] border border-[#c2bfba] bg-gradient-to-b from-[#f8f7f6] to-[#eceae8] pl-[11px] pr-[24px] text-[13px] text-[#3d3d3d] ${h}`}>
    <span>{label}</span><Tri color="#2e3436" w={10} h={6} />
  </div>
);
const Spin = ({ value, w }) => (
  <div className={`flex h-[34px] shrink-0 items-stretch rounded-[5px] border border-[#c8c5c0] bg-white text-[13px] text-[#3d3d3d] ${w}`}>
    <div className="flex-1 pl-[9px] leading-[32px]">{value}</div>
    <div className="flex w-[35px] shrink-0 items-center justify-center border-l border-[#e5e3e0]"><div className="h-[1px] w-[15px] bg-[#cfcdca]" /></div>
    <div className="flex w-[57px] shrink-0 items-center border-l border-[#e5e3e0] pl-[10px]"><svg width="14" height="14" viewBox="0 0 14 14" className="block" stroke="#2e3436" strokeWidth="1.400"><path d="M7 0v14M0 7h14" /></svg></div>
  </div>
);
const Sec = ({ label, open, mt }) => (
  <div className={`flex h-[18px] shrink-0 items-center bg-[#e6e5e3] text-[13.500px] font-bold text-[#3d3d3d] ${mt || ''}`}>
    <Slot className="w-[16px]">
      {open
        ? <svg width="11" height="6" viewBox="0 0 11 6" className="block"><path d="M0 0h11L5.500 6z" fill="#2e3436" /></svg>
        : <svg width="6" height="11" viewBox="0 0 6 11" className="ml-[2px] block"><path d="M0 0l6 5.500L0 11z" fill="#2e3436" /></svg>}
    </Slot>
    <span className="whitespace-nowrap">{label}</span>
  </div>
);
const Row = ({ label, children, className = 'h-[34px]', lab = '' }) => (
  <div className={`flex shrink-0 items-center pl-[6px] text-[13px] text-[#3d3d3d] ${className}`}>
    <div className={`w-[95px] shrink-0 whitespace-nowrap ${lab}`}>{label}</div>
    {children}
  </div>
);

const Deck = () => (
  <div className={`relative flex w-[338px] shrink-0 flex-col overflow-hidden pl-[9px] ${D}`}>
    <div className="flex h-[25px] shrink-0 items-center pl-[1px]">
      <svg width="3" height="12" viewBox="0 0 3 12" className="block shrink-0"><path d="M1.500 0v2M1.500 5v2M1.500 10v2" stroke="#222" strokeWidth="1.500" /></svg>
      <span className="ml-[6px] text-[13.500px] font-bold text-[#3d3d3d]">Properties</span>
      <svg width="9" height="9" viewBox="0 0 9 9" className="ml-[224px] block shrink-0" stroke="#222" strokeWidth="1.800"><path d="M.5.5l8 8M8.500.5l-8 8" /></svg>
    </div>
    <Sec label="Character" />
    <Sec label="Paragraph" mt="mt-[1px]" />
    <Sec label="Area" open mt="mt-[1px]" />
    <Row label="Fill:" className="mt-[6px] h-[34px]" lab="pt-[2px]"><Drop label="Color" h="h-[34px] pt-[2px]" /></Row>
    <div className="flex h-[48px] shrink-0 items-center pl-[110px]">
      <Svg w={16} h={14}><path d="M1 7l3-2 5-3 3 3v8l-5 0-4-3z" fill="#fff" stroke="#555" strokeWidth=".9" /><path d="M1 12V6l4-2" stroke="#1d6ab0" strokeWidth="1.800" /></Svg>
      <div className="ml-[3px] h-[13px] w-[60px] shrink-0 border border-[#8b8b8b] bg-[#729fcf]" />
      <div className="ml-[11px]"><Tri color="#2e3436" w={11} h={6} /></div>
    </div>
    <Row label="Transparency:" className="h-[34px] pt-[1px]"><Drop label="None" /></Row>
    <div className="mt-[3px] flex h-[34px] shrink-0 items-center pl-[9px]">
      <div className="h-[19px] w-[19px] shrink-0 rounded-full border border-[#c2bfba] bg-gradient-to-b from-[#fdfdfd] to-[#efedeb] shadow-[0_1px_1px_#bbb]" />
      <div className="h-[4px] w-[166px] shrink-0 rounded-r-[2px] bg-[#dad7d3]" />
      <div className="ml-[18px]"><Spin value="0%" w="w-[149px]" /></div>
    </div>
    <Sec label="Line" open mt="mt-[7px]" />
    <Row label="Line:" className="mt-[5px] h-[45px]">
      <div className="ml-[75px] flex shrink-0 items-center">
        <Svg w={17} h={14}><path d="M1 4.500h14M1 11h16" stroke={BL} strokeWidth="1.200" /><path d="M12 1l5 3.500L12 7z" fill={BL} /><rect y="8" width="6" height="6" fill={BL} /></Svg>
        <div className="ml-[13px]"><Tri color="#2e3436" w={11} h={6} /></div>
        <div className="ml-[10px] flex h-[13px] w-[85px] shrink-0 items-center bg-white"><div className="h-[1px] w-full bg-[#444]" /></div>
        <div className="ml-[9px]"><Tri color="#2e3436" w={11} h={6} /></div>
      </div>
    </Row>
    <Row label="Width:" className="h-[45px]">
      <div className="ml-[134px] flex shrink-0 items-center">
        <div className="h-[1px] w-[76px] bg-[#333]" />
        <div className="ml-[9px]"><Tri color="#2e3436" w={11} h={6} /></div>
      </div>
    </Row>
    <Row label="Color:" className="h-[45px]">
      <div className="ml-[130px] flex shrink-0 items-center">
        <Svg w={18} h={15}><path d="M0 9h14M0 11.500h14" stroke="#222" strokeWidth="1" /><path d="M0 14.500h14" stroke="#222" strokeDasharray="2 1" /><path d="M7 8l2-2 6-5c2 0 2 1 1 3l-5 5z" fill="#fff" stroke="#555" strokeWidth=".8" /><path d="M6 9l3-3 2 2-2 1z" fill={BL} /></Svg>
        <div className="ml-[1px] h-[13px] w-[60px] shrink-0 border border-[#8b8b8b] bg-[#3465a4]" />
        <div className="ml-[10px]"><Tri color="#2e3436" w={11} h={6} /></div>
      </div>
    </Row>
    <Row label="Transparency:" className="mt-[2px] h-[34px]"><Spin value="0%" w="w-[260px]" /></Row>
    <Row label="Corner style:" className="mt-[3px] h-[33px]"><Drop label="Rounded" /></Row>
    <Row label="Cap style:" className="mt-[4px] h-[33px]"><Drop label="Flat" /></Row>
    <Sec label="Effect" mt="mt-[7px]" />
    <Sec label="Shadow" mt="mt-[1px]" />
    <Sec label="Position and Size" open mt="mt-[1px]" />
    <div className="mt-[7px] pl-[101px]"><Spin value="" w="w-[260px]" /></div>
    <div className="absolute left-0 top-[278px] flex h-[73px] w-[6px] items-center justify-center bg-[#9a9a9a]">
      <svg width="4" height="8" viewBox="0 0 4 8" className="block"><path d="M0 0l4 4-4 4z" fill="#f2f2f2" /></svg>
    </div>
  </div>
);

const TabBar = () => (
  <div className="flex w-[50px] shrink-0 flex-col">
    <Slot className="h-[38px] w-[44px]"><svg width="16" height="12" viewBox="0 0 16 12" className="block" stroke="#222" strokeWidth="1.500"><path d="M0 1h16M0 6h16M0 11h16" /></svg></Slot>
    <div className="ml-[4px] mt-[8px] flex h-[34px] w-[36px] items-center justify-center rounded-[4px] bg-[#d2cfcb]">
      <Svg w={20} h={20}><rect x=".5" y=".5" width="19" height="19" fill="#fff" stroke={INK} /><path d="M0 .5h20v3H0z" fill={INK} /><path d="M3 10h14M3 14h14" stroke={BL} /><circle cx="12" cy="10" r="1.500" fill={BL} /><circle cx="8" cy="14" r="1.500" fill={BL} /></Svg>
    </div>
    <Slot className="mt-[4px] h-[42px] w-[44px]"><Svg w={22} h={22}><path d="M1 16L7 1h1l5 12M3.500 10h7" stroke={INK} strokeWidth="1.100" /><path d="M10 15l9-8c2-1 3 0 2 2l-8 8z" fill="#fff" stroke={INK} strokeWidth=".8" /><path d="M5 21c4 0 6-1 8-4l-3-2c-2 1-2 4-5 6z" fill={BL} /></Svg></Slot>
    <Slot className="h-[42px] w-[44px]"><Svg w={24} h={20}><path d="M1 18V3h7l2 2h9v3" fill="#fde2a8" stroke="#dd9a3b" /><path d="M1 18l3-8h7" stroke="#dd9a3b" /><rect x="9" y="7" width="14" height="12" fill="#fff" stroke={INK} /><path d="M10 17l4-5 3 3 2-2 3 4z" fill={BL} /></Svg></Slot>
    <Slot className="h-[42px] w-[44px]"><Svg w={20} h={20}><circle cx="10" cy="10" r="9.300" fill="#fff" stroke={INK} /><path d="M15 5l-2.500 6.500L5 15l2.500-6.500z" fill="#2f86c1" /></Svg></Slot>
    <Slot className="h-[42px] w-[44px]"><Svg w={20} h={20}><path d="M10 .7L19.300 10 10 19.300.7 10z" stroke={INK} /></Svg></Slot>
  </div>
);

const ITEMS = [
  { t: 'Spelling...', k: 'F7' },
  { t: 'Automatic Spell Checking', k: 'Shift+F7', c: 'on' },
  { t: 'Thesaurus...', k: 'Ctrl+F7', dis: true },
  { t: 'Language', sub: true },
  { sep: true },
  { t: 'AutoCorrect Options...' },
  { sep: true },
  { t: 'ImageMap', c: 'off' },
  { t: 'Color Replacer', c: 'off', hi: true },
  { t: 'Media Player', c: 'off' },
  { sep: true },
  { t: 'Forms', sub: true },
  { t: 'Macros', sub: true },
  { t: 'Redact', sub: true },
  { sep: true },
  { t: 'Development Tools', c: 'off' },
  { t: 'Extension Manager...', k: 'Ctrl+Alt+E' },
  { t: 'Customize...' },
  { t: 'Options...', k: 'Alt+F12' },
];

const MenuPopup = () => (
  <div className={`absolute left-[386px] top-[176px] w-[301px] border border-[#bdbbb8] bg-white text-[13px] shadow-[0_1px_2px_rgba(0,0,0,0.15)] ${D}`}>
    {ITEMS.map((it, i) => it.sep
      ? <div key={i} className="h-[1px] bg-[#e2e0dd]" />
      : (
        <div key={i} className={`flex h-[24px] items-center pt-[2px] ${it.hi ? 'bg-[#3584e4] text-white' : it.dis ? 'text-[#a9a9a9]' : 'text-[#3d3d3d]'}`}>
          <div className="flex w-[28px] shrink-0 items-center justify-center">
            {it.c && (
              <div className={`flex h-[15px] w-[16px] items-center justify-center rounded-[3px] border ${it.hi ? 'border-[#e4eefb]' : 'border-[#3d3d3d]'}`}>
                {it.c === 'on' && <svg width="12" height="10" viewBox="0 0 12 10" className="block" fill="none" stroke="#2e3436" strokeWidth="2.400"><path d="M1 5l3.500 3.500L11 1.500" /></svg>}
              </div>
            )}
          </div>
          <span className="ml-[1px] whitespace-nowrap">{it.t}</span>
          {it.k && <span className={`ml-auto mr-[9px] whitespace-nowrap ${it.dis ? 'text-[#c4c4c4]' : 'text-[#8c8c8c]'}`}>{it.k}</span>}
          {it.sub && <svg width="6" height="11" viewBox="0 0 6 11" className="ml-auto mr-[12px] block"><path d="M0 0l6 5.500L0 11z" fill="#2e3436" /></svg>}
        </div>
      ))}
  </div>
);

export default function App() {
  return (
    <div className="relative flex h-[810px] w-[1440px] flex-col overflow-hidden bg-black">
      <TopPanel />
      <QemuBar />
      <div className="flex min-h-0 flex-1 flex-col px-[40px]">
        <XfcePanel />
        <div className="flex min-h-0 flex-1 flex-col overflow-hidden bg-[#f6f5f4]">
          <TitleBar />
          <MenuBar />
          <Toolbar />
          <div className="relative flex min-h-0 flex-1">
            <LeftBar />
            <PagesPanel />
            <CanvasCol />
            <ScrollTrack />
            <Deck />
            <TabBar />
            <div className="absolute left-[230px] top-[278px] flex h-[73px] w-[7px] items-center justify-center bg-[#9a9a9a]">
              <svg width="4" height="8" viewBox="0 0 4 8" className="block"><path d="M4 0L0 4l4 4z" fill="#f2f2f2" /></svg>
            </div>
          </div>
        </div>
      </div>
      <MenuPopup />
    </div>
  );
}
